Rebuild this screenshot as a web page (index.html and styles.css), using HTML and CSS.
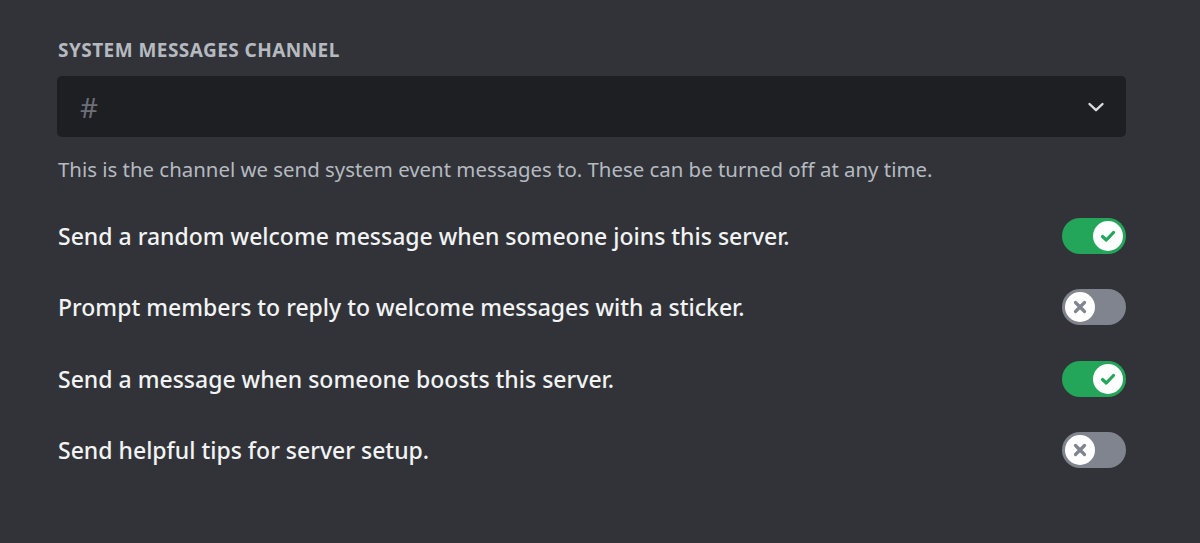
FILE: index.html
```html
<!DOCTYPE html>
<html>
<head>
<meta charset="utf-8">
<link rel="stylesheet" href="styles.css">
</head>
<body>
<div class="page">
  <div class="section-title">System Messages Channel</div>
  <div class="select">
    <span class="hash">#</span>
    <svg class="chev" width="20" height="20" viewBox="0 0 20 20"><path d="M3.5 7 L10 13.2 L16.5 7" fill="none" stroke="#dbdee1" stroke-width="2.4" stroke-linecap="round" stroke-linejoin="round"/></svg>
  </div>
  <div class="desc">This is the channel we send system event messages to. These can be turned off at any time.</div>
  <div class="rows">
    <div class="row">
      <span class="label">Send a random welcome message when someone joins this server.</span>
      <div class="toggle on"><div class="knob"><svg width="20" height="20" viewBox="0 0 20 20"><path d="M4.5 10.5 L8.3 14 L15.5 6.5" fill="none" stroke="#23a55a" stroke-width="3.2" stroke-linecap="round" stroke-linejoin="round"/></svg></div></div>
    </div>
    <div class="row">
      <span class="label">Prompt members to reply to welcome messages with a sticker.</span>
      <div class="toggle off"><div class="knob"><svg width="20" height="20" viewBox="0 0 20 20"><path d="M5.5 5.5 L14.5 14.5 M14.5 5.5 L5.5 14.5" fill="none" stroke="#80848e" stroke-width="3.2" stroke-linecap="round"/></svg></div></div>
    </div>
    <div class="row">
      <span class="label">Send a message when someone boosts this server.</span>
      <div class="toggle on"><div class="knob"><svg width="20" height="20" viewBox="0 0 20 20"><path d="M4.5 10.5 L8.3 14 L15.5 6.5" fill="none" stroke="#23a55a" stroke-width="3.2" stroke-linecap="round" stroke-linejoin="round"/></svg></div></div>
    </div>
    <div class="row">
      <span class="label">Send helpful tips for server setup.</span>
      <div class="toggle off"><div class="knob"><svg width="20" height="20" viewBox="0 0 20 20"><path d="M5.5 5.5 L14.5 14.5 M14.5 5.5 L5.5 14.5" fill="none" stroke="#80848e" stroke-width="3.2" stroke-linecap="round"/></svg></div></div>
    </div>
  </div>
</div>
</body>
</html>
```
FILE: styles.css
```css
html, body {
  margin: 0;
  padding: 0;
  background: #313338;
  height: 100%;
}
body {
  font-family: "Noto Sans", "Open Sans", sans-serif;
  overflow: hidden;
}
.page {
  width: 1069px;
  padding: 38px 0 0 57px;
}
.section-title {
  color: #b5bac1;
  font-size: 19px;
  font-weight: 700;
  text-transform: uppercase;
  line-height: 24px;
  letter-spacing: 0.45px;
  margin-bottom: 14px;
  padding-left: 1px;
}
.select {
  height: 61px;
  background: #1e1f22;
  border-radius: 5px;
  display: flex;
  align-items: center;
  justify-content: space-between;
  padding: 0 20px 0 23px;
}
.hash {
  color: #6d6f78;
  font-size: 28px;
  font-weight: 400;
}
.chev { display: block; }
.desc {
  color: #b5bac1;
  font-size: 20.4px;
  line-height: 26px;
  margin-top: 19px;
  padding-left: 1px;
}
.rows {
  margin-top: 36px;
  display: flex;
  flex-direction: column;
  gap: 35.3px;
}
.row {
  display: flex;
  align-items: center;
  justify-content: space-between;
  height: 36px;
}
.label {
  color: #f2f3f5;
  font-size: 23px;
  font-weight: 500;
  padding-left: 1px;
}
.toggle {
  width: 64px;
  height: 36px;
  border-radius: 18px;
  display: flex;
  align-items: center;
  padding: 0 3px;
  box-sizing: border-box;
}
.toggle.on { background: #23a55a; justify-content: flex-end; }
.toggle.off { background: #80848e; justify-content: flex-start; }
.knob {
  width: 30px;
  height: 30px;
  border-radius: 50%;
  background: #ffffff;
  display: flex;
  align-items: center;
  justify-content: center;
}
.knob svg { display: block; }
```
